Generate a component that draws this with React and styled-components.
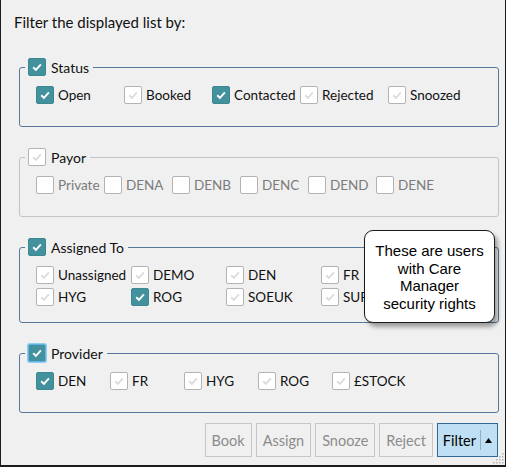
import React from 'react'
import styled, { createGlobalStyle } from 'styled-components'

const Global = createGlobalStyle`
    html, body { margin: 0; padding: 0; background: #fff; }
    * { box-sizing: border-box; }
`

const Window = styled.div`
    position: relative;
    width: 506px;
    height: 467px;
    background: #f0f0f0;
    border-left: 1px solid #1c1c1c;
    border-right: 1px solid #1c1c1c;
    border-bottom: 2px solid #1c1c1c;
    padding: 12px 6px 0 13px;
    font-family: Lato, "Noto Sans", sans-serif;
    color: #111;
`

const Title = styled.div`
    font-size: 15px;
    line-height: 20px;
    height: 20px;
    margin-bottom: 25px;
`

const Groups = styled.div`
    display: flex;
    flex-direction: column;
    gap: 20px;
    margin-left: 5px;
`

const Group = styled.fieldset`
    margin: 0;
    min-width: 0;
    border: 1px solid ${p => (p.$disabled ? '#c4c4c4' : '#56799a')};
    border-radius: 3px;
    padding: 8px 0 ${p => p.$bottom || 21}px 0;
`

const Legend = styled.legend`
    display: flex;
    align-items: center;
    gap: 5px;
    height: 20px;
    margin-left: 5px;
    padding: 0 4px 0 3px;
    font-size: 14px;
    color: #111;
`

const Items = styled.div`
    display: grid;
    grid-template-columns: repeat(${p => p.$cols}, ${p => p.$col}px);
    row-gap: 2px;
    padding-left: 16px;
`

const Item = styled.label`
    display: flex;
    align-items: center;
    gap: 4px;
    height: 20px;
    font-size: 13.5px;
    white-space: nowrap;
    color: ${p => (p.$muted ? '#7b7b7b' : '#111')};
`

const Box = styled.span`
    display: inline-flex;
    align-items: center;
    justify-content: center;
    flex: none;
    width: 18px;
    height: 18px;
    border-radius: 2px;
    background: ${p => (p.$checked ? '#43919c' : '#ffffff')};
    border: 1px solid ${p => (p.$focus ? '#5fb4e6' : p.$checked ? '#3b8893' : '#b3b3b3')};
    box-shadow: ${p => (p.$focus ? '0 0 0 1px #8fcdf0' : 'none')};
`

const Buttons = styled.div`
    display: flex;
    justify-content: flex-end;
    gap: 4px;
    margin-top: 10px;
    padding-right: 1px;
`

const Button = styled.button`
    height: 34px;
    padding: 0 6px;
    font-family: Lato, "Noto Sans", sans-serif;
    font-size: 14.5px;
    background: #f0f0f0;
    color: #8c8c8c;
    border: 1px solid #c6c6c6;
    border-radius: 0;
`

const FilterButton = styled(Button)`
    display: flex;
    align-items: center;
    gap: 4px;
    padding: 0 5px 0 5px;
    background: #bfe0f4;
    border-color: #2f6b99;
    color: #000;
`

const Divider = styled.span`
    width: 1px;
    height: 20px;
    background: #8fb0c6;
`

const Tooltip = styled.div`
    position: absolute;
    left: 363px;
    top: 230px;
    width: 131px;
    height: 93px;
    padding-top: 11px;
    background: #fff;
    border: 1px solid #1a1a1a;
    border-radius: 9px;
    box-shadow: 3px 4px 4px rgba(0, 0, 0, 0.35);
    font-family: "Liberation Sans", Arial, sans-serif;
    font-size: 15px;
    line-height: 17.5px;
    text-align: center;
    color: #000;
`

const Grip = styled.svg`
    position: absolute;
    right: 1px;
    bottom: 1px;
`

function Check({ checked, faint = true, focus }) {
    return (
        <Box $checked={checked} $focus={focus}>
            {(checked || faint) && (
                <svg width="12" height="12" viewBox="0 0 12 12">
                    <path d="M2.2 6.3 L4.9 8.9 L9.9 3.3" fill="none"
                        stroke={checked ? '#fff' : '#dcdcdc'} strokeWidth="1.9" />
                </svg>
            )}
        </Box>
    )
}

const status = [
    { name: 'Open', on: true },
    { name: 'Booked' },
    { name: 'Contacted', on: true },
    { name: 'Rejected' },
    { name: 'Snoozed' },
]
const payors = ['Private', 'DENA', 'DENB', 'DENC', 'DEND', 'DENE']
const users = [
    { name: 'Unassigned' }, { name: 'DEMO' }, { name: 'DEN' }, { name: 'FR' },
    { name: 'HYG' }, { name: 'ROG', on: true }, { name: 'SOEUK' }, { name: 'SUP' },
]
const providers = [
    { name: 'DEN', on: true }, { name: 'FR' }, { name: 'HYG' }, { name: 'ROG' }, { name: '£STOCK' },
]

export default function App() {
    return (
        <Window>
            <Global />
            <Title>Filter the displayed list by:</Title>
            <Groups>
                <Group>
                    <Legend><Check checked />Status</Legend>
                    <Items $cols={5} $col={88}>
                        {status.map(s => (
                            <Item key={s.name}><Check checked={s.on} />{s.name}</Item>
                        ))}
                    </Items>
                </Group>
                <Group $disabled>
                    <Legend><Check />Payor</Legend>
                    <Items $cols={6} $col={68}>
                        {payors.map(p => (
                            <Item key={p} $muted><Check faint={false} />{p}</Item>
                        ))}
                    </Items>
                </Group>
                <Group $bottom={15}>
                    <Legend><Check checked />Assigned To</Legend>
                    <Items $cols={4} $col={95}>
                        {users.map(u => (
                            <Item key={u.name}><Check checked={u.on} />{u.name}</Item>
                        ))}
                    </Items>
                </Group>
                <Group>
                    <Legend><Check checked focus />Provider</Legend>
                    <Items $cols={5} $col={74}>
                        {providers.map(p => (
                            <Item key={p.name}><Check checked={p.on} />{p.name}</Item>
                        ))}
                    </Items>
                </Group>
            </Groups>
            <Buttons>
                <Button>Book</Button>
                <Button>Assign</Button>
                <Button>Snooze</Button>
                <Button>Reject</Button>
                <FilterButton>
                    Filter
                    <Divider />
                    <svg width="7" height="5" viewBox="0 0 7 5"><path d="M0 5 L3.5 0 L7 5 Z" fill="#000" /></svg>
                </FilterButton>
            </Buttons>
            <Tooltip>
                These are users<br />with Care<br />Manager<br />security rights
            </Tooltip>
            <Grip width="11" height="11" viewBox="0 0 11 11">
                {[[9, 1], [9, 4], [6, 4], [9, 7], [6, 7], [3, 7], [9, 10], [6, 10], [3, 10], [0, 10]].map(([x, y], i) => (
                    <rect key={i} x={x} y={y - 1} width="1.5" height="1.5" fill="#b5b5b5" />
                ))}
            </Grip>
        </Window>
    )
}
